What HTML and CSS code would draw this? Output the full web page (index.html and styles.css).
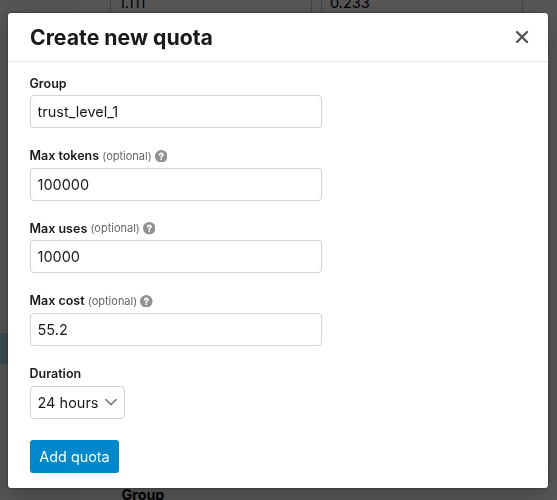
FILE: index.html
```
<!DOCTYPE html>
<html lang="en">

<head>
    <meta charset="UTF-8">
    <title>Create new quota</title>
    <link rel="stylesheet" href="styles.css">
</head>

<body>
    <!-- Page behind the modal -->
    <div class="page">
        <div class="sidebar">
            <div class="sidebar-active"></div>
        </div>
        <div class="content">
            <div class="cost-row">
                <div class="cost-input">1.111</div>
                <div class="cost-input">0.233</div>
            </div>
            <div class="quota-heading">Group</div>
        </div>
    </div>

    <!-- Modal -->
    <div class="backdrop">
        <div class="modal">
            <div class="modal-header">
                <h1>Create new quota</h1>
                <button type="button" class="close" aria-label="Close">
                    <svg width="14" height="14" viewBox="0 0 14 14"><path d="M2 2L12 12M12 2L2 12" /></svg>
                </button>
            </div>
            <form class="modal-body">
                <div class="field">
                    <label for="group">Group</label>
                    <input type="text" id="group" value="trust_level_1">
                </div>
                <div class="field">
                    <label for="maxTokens">Max tokens <span class="optional">(optional)</span>
                        <svg class="help" viewBox="0 0 12 12"><circle cx="6" cy="6" r="6" /><path d="M4.4 4.6C4.5 3.7 5.1 3.2 6 3.2C7 3.2 7.7 3.8 7.7 4.6C7.7 5.7 6 5.6 6 6.9" /><circle class="dot" cx="6" cy="8.9" r="0.9" /></svg>
                    </label>
                    <input type="text" id="maxTokens" value="100000">
                </div>
                <div class="field">
                    <label for="maxUses">Max uses <span class="optional">(optional)</span>
                        <svg class="help" viewBox="0 0 12 12"><circle cx="6" cy="6" r="6" /><path d="M4.4 4.6C4.5 3.7 5.1 3.2 6 3.2C7 3.2 7.7 3.8 7.7 4.6C7.7 5.7 6 5.6 6 6.9" /><circle class="dot" cx="6" cy="8.9" r="0.9" /></svg>
                    </label>
                    <input type="text" id="maxUses" value="10000">
                </div>
                <div class="field">
                    <label for="maxCost">Max cost <span class="optional">(optional)</span>
                        <svg class="help" viewBox="0 0 12 12"><circle cx="6" cy="6" r="6" /><path d="M4.4 4.6C4.5 3.7 5.1 3.2 6 3.2C7 3.2 7.7 3.8 7.7 4.6C7.7 5.7 6 5.6 6 6.9" /><circle class="dot" cx="6" cy="8.9" r="0.9" /></svg>
                    </label>
                    <input type="text" id="maxCost" value="55.2">
                </div>
                <div class="field">
                    <label>Duration</label>
                    <button type="button" class="select">
                        24 hours
                        <svg width="12" height="8" viewBox="0 0 12 8"><path d="M1 1.7L6 6.7L11 1.7" /></svg>
                    </button>
                </div>
                <button type="button" class="submit">Add quota</button>
            </form>
        </div>
    </div>
</body>

</html>
```
FILE: styles.css
```
* {
    box-sizing: border-box;
}

body {
    margin: 0;
    height: 500px;
    overflow: hidden;
    font-family: Inter, "Liberation Sans", sans-serif;
    font-size: 14.5px;
    color: #1a1a1a;
}

/* Page behind the modal */
.page {
    display: flex;
    height: 500px;
    background: #f8f8f8;
}

.sidebar {
    width: 74px;
    padding-top: 333px;
    background: #f2f2f2;
}

.sidebar-active {
    height: 31px;
    background: #a5dcf5;
}

.content {
    flex: 1;
    display: flex;
    flex-direction: column;
    justify-content: space-between;
    padding-left: 36px;
    color: #000;
}

.cost-row {
    display: flex;
    gap: 9px;
}

.cost-input {
    width: 202px;
    height: 19px;
    padding-left: 8px;
    border: 1px solid #bbb;
    border-width: 0 1px 1px;
    line-height: 6px;
}

.quota-heading {
    height: 16px;
    padding-left: 11.5px;
    font-size: 14.3px;
    font-weight: 700;
    line-height: 22px;
}

/* Modal */
.backdrop {
    position: fixed;
    top: 0;
    left: 0;
    width: 100%;
    height: 100%;
    padding: 13px 9px 12px 8px;
    background: rgba(0, 0, 0, 0.65);
}

.modal {
    height: 475px;
    background: #fff;
    border-radius: 3px;
    box-shadow: 0 0 2px rgba(0, 0, 0, 0.6), 0 8px 30px rgba(0, 0, 0, 0.25);
}

.modal-header {
    display: flex;
    align-items: center;
    justify-content: space-between;
    height: 49px;
    padding: 0 19px 0 22px;
    border-bottom: 1px solid #e9e9e9;
}

h1 {
    margin: 0;
    font-size: 21.25px;
    font-weight: 700;
    line-height: 28px;
}

button {
    font-family: inherit;
    cursor: pointer;
}

.close {
    display: flex;
    padding: 0;
    border: none;
    background: none;
}

.close path {
    fill: none;
    stroke: #555;
    stroke-width: 2.4;
    stroke-linecap: round;
}

.modal-body {
    padding: 11.2px 21.5px 0;
}

.field {
    height: 72.6px;
}

label {
    display: flex;
    align-items: center;
    height: 20px;
    margin-bottom: 2px;
    font-size: 12.5px;
    font-weight: 600;
    white-space: pre;
}

.optional {
    font-size: 11px;
    font-weight: 400;
    color: #666;
}

.help {
    width: 12.5px;
    height: 12.5px;
    margin-left: 3px;
    fill: #919191;
}

.help path {
    fill: none;
    stroke: #fff;
    stroke-width: 1.6;
    stroke-linecap: round;
}

.help .dot {
    fill: #fff;
}

input,
.select {
    display: flex;
    height: 33px;
    padding: 0 7px;
    border: 1px solid #d2d2d2;
    border-radius: 4px;
    background: #fff;
    color: #1a1a1a;
    font-family: inherit;
    font-size: 14.5px;
}

input {
    width: 292.4px;
}

.select {
    width: 95.5px;
    align-items: center;
    justify-content: space-between;
}

.select path {
    fill: none;
    stroke: #808080;
    stroke-width: 1.7;
    stroke-linecap: round;
    stroke-linejoin: round;
}

.submit {
    display: block;
    width: 89px;
    height: 33px;
    margin-top: 4px;
    margin-left: 0.5px;
    padding: 0;
    border: none;
    border-radius: 3px;
    background: #0088cc;
    color: #fff;
    font-size: 14.4px;
}
```
